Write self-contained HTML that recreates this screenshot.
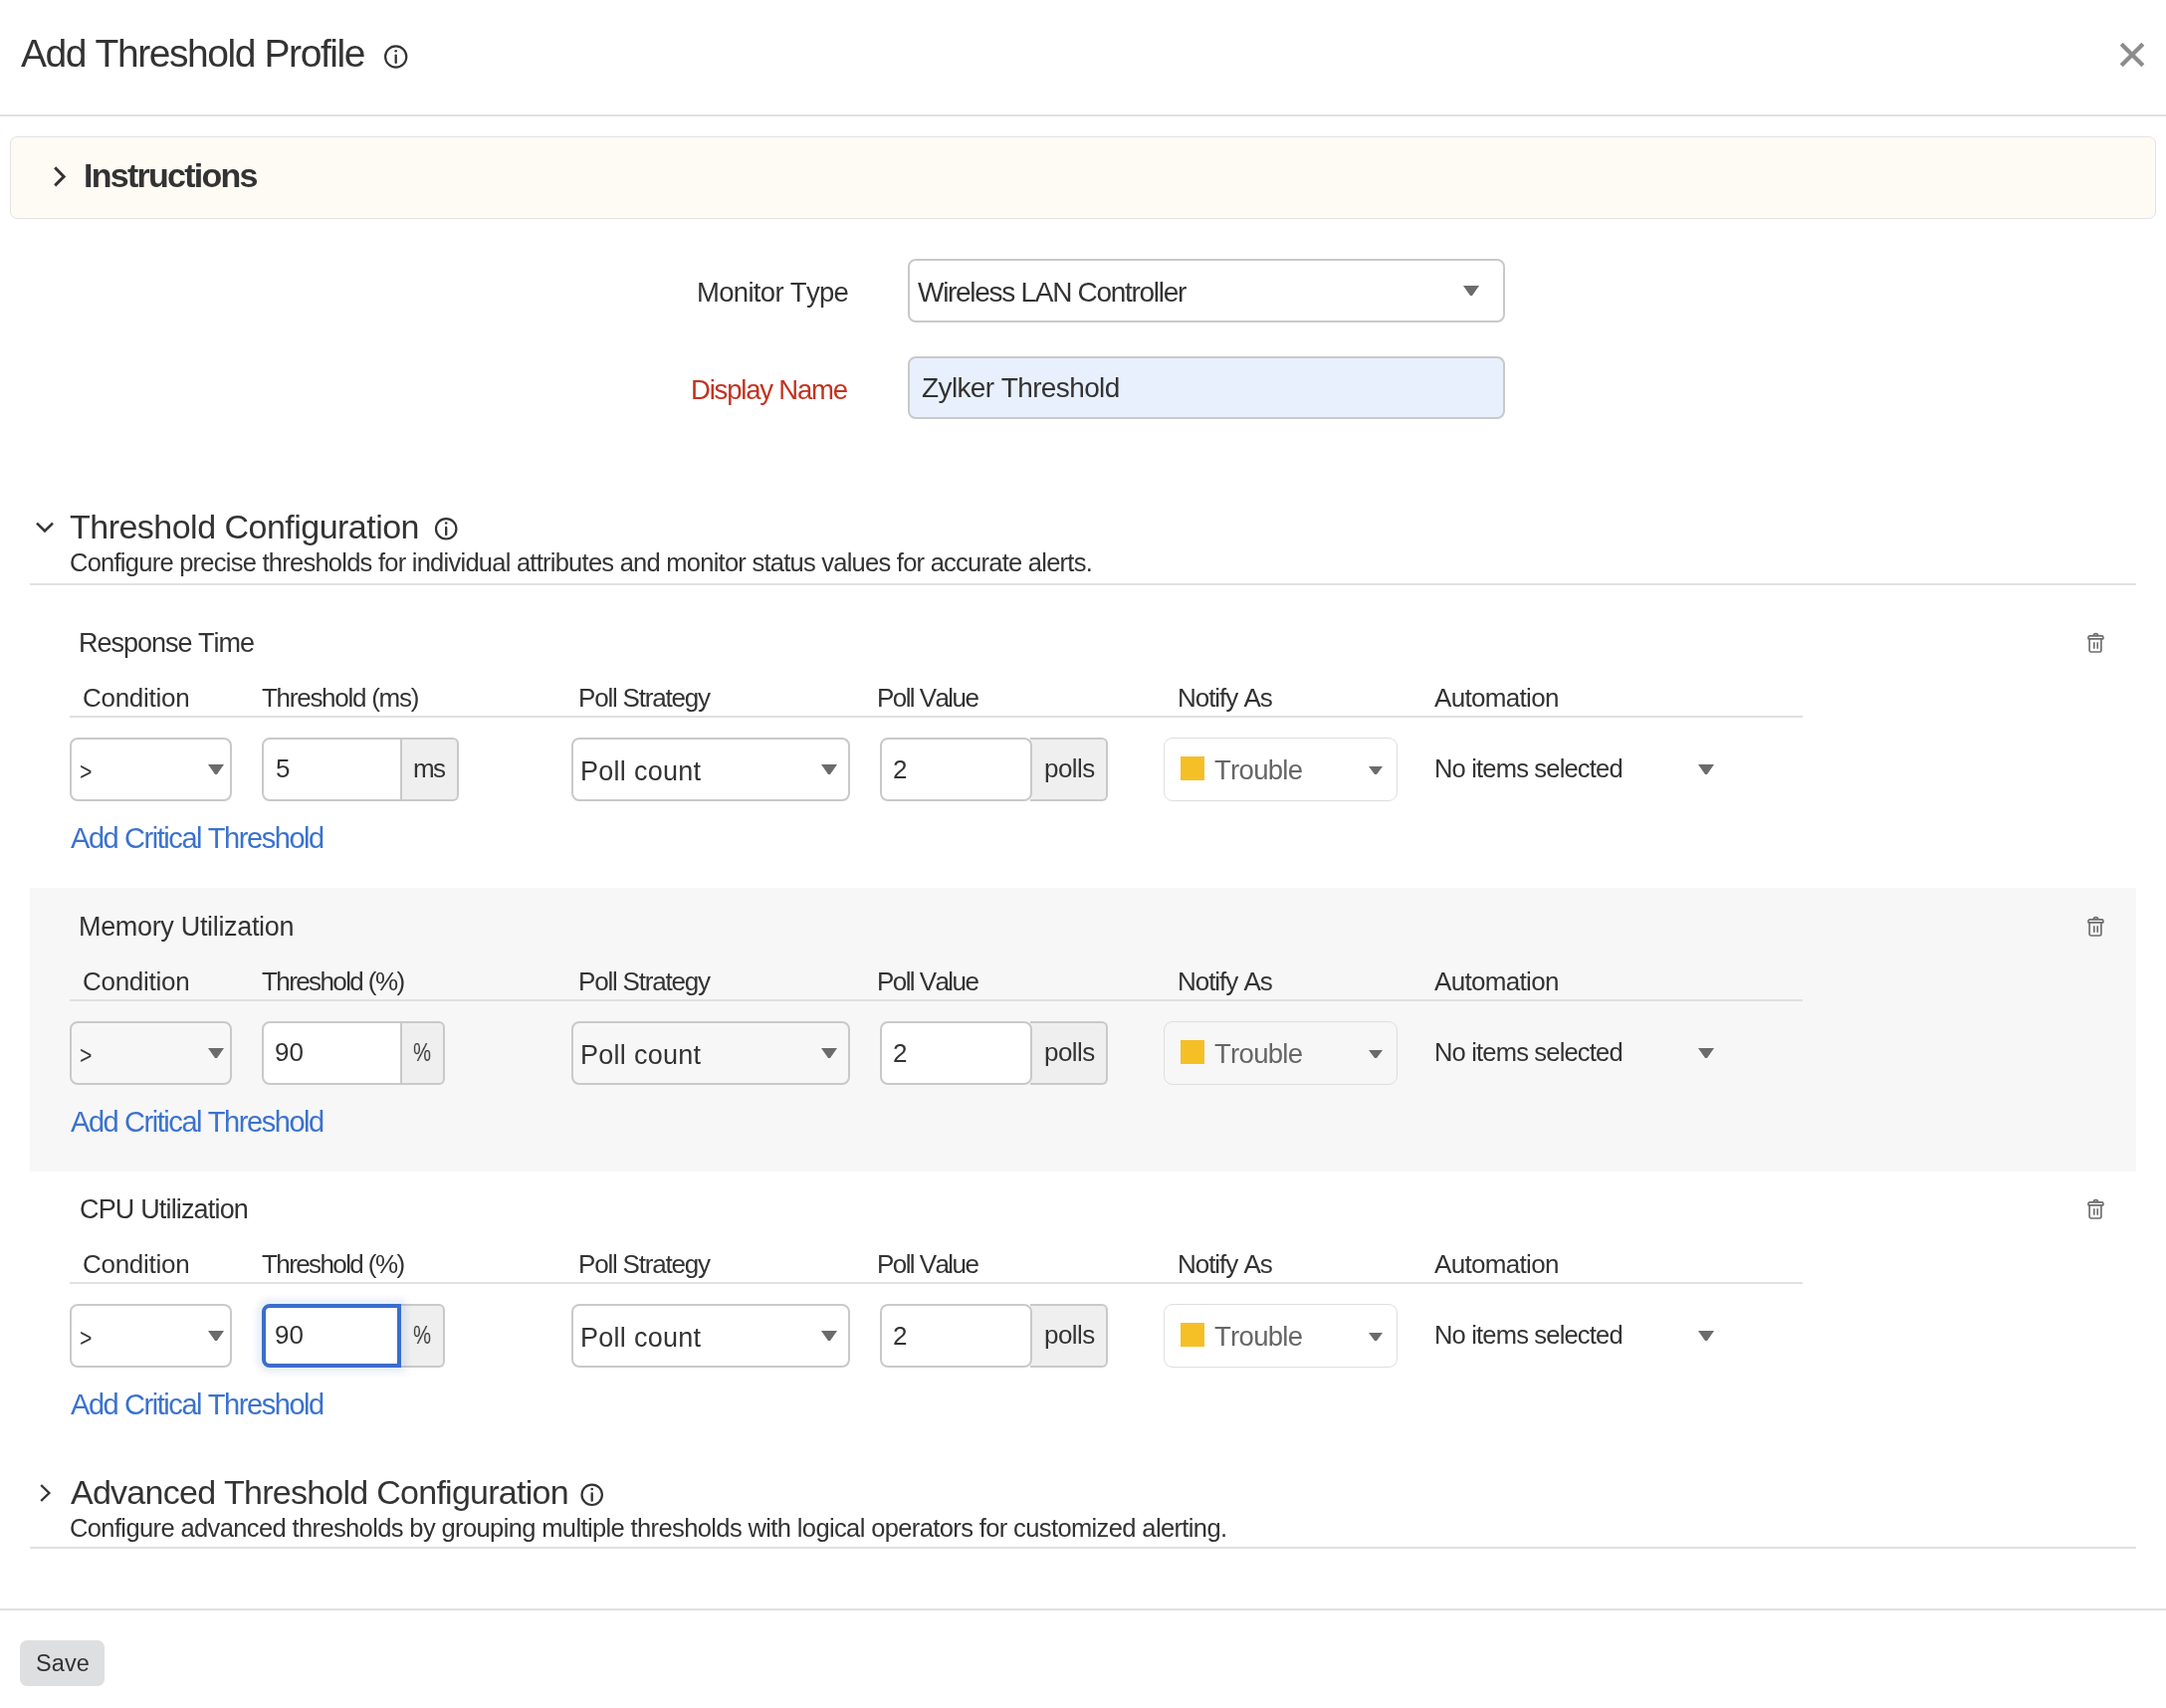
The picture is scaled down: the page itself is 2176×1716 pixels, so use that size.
<!DOCTYPE html>
<html><head><meta charset="utf-8"><title>Add Threshold Profile</title>
<style>
html,body{margin:0;padding:0;background:#fff;width:2176px;height:1716px;overflow:hidden}
body{position:relative;font-family:"Liberation Sans",sans-serif;font-kerning:none}
.t{position:absolute;white-space:nowrap;line-height:normal;font-kerning:none;will-change:transform}
.b{position:absolute}
</style></head><body>
<div class="t" style="left:21.22px;top:32px;font-size:39px;letter-spacing:-1.426px;color:#333333;font-weight:400;">Add Threshold Profile</div>
<svg class="b" style="left:384px;top:43px" width="28" height="28" viewBox="0 0 28 28"><circle cx="13.70" cy="14.00" r="10.6" fill="none" stroke="#333" stroke-width="2.2"/><circle cx="13.70" cy="8.20" r="1.3" fill="#333"/><line x1="13.70" y1="12.60" x2="13.70" y2="19.90" stroke="#333" stroke-width="2.3" stroke-linecap="round"/></svg>
<svg class="b" style="left:2128px;top:41px" width="28" height="28" viewBox="0 0 28 28"><path d="M3.2,3.2 L24.8,24.8 M24.8,3.2 L3.2,24.8" stroke="#8c8c8c" stroke-width="4.2"/></svg>
<div class="b" style="left:0px;top:115px;width:2176px;height:2px;background:#e0e1e1"></div>
<div class="b" style="left:10px;top:137px;width:2156px;height:83px;background:#fefbf4;border:1.5px solid #e2e3e3;border-radius:7px;box-sizing:border-box"></div>
<svg class="b" style="left:52px;top:166px" width="16" height="23" viewBox="0 0 16 23"><polyline points="3.2,2.4 12.2,11.4 3.2,20.4" fill="none" stroke="#333" stroke-width="2.9"/></svg>
<div class="t" style="left:84.33px;top:157px;font-size:34px;letter-spacing:-1.746px;color:#333333;font-weight:700;">Instructions</div>
<div class="t" style="left:699.54px;top:278px;font-size:27.5px;letter-spacing:-0.691px;color:#333333;font-weight:400;">Monitor Type</div>
<div class="b" style="left:912px;top:260px;width:600px;height:64px;background:#fff;border:2px solid #c9c9c9;border-radius:8px;box-sizing:border-box"></div>
<div class="t" style="left:921.88px;top:278px;font-size:28px;letter-spacing:-1.293px;color:#333333;font-weight:400;">Wireless LAN Controller</div>
<svg class="b" style="left:1470px;top:287px" width="16" height="10" viewBox="0 0 16 10"><polygon points="0,0 16,0 9.0,10 7.0,10" fill="#6b6b6b"/></svg>
<div class="t" style="left:694.34px;top:376px;font-size:27.5px;letter-spacing:-1.190px;color:#c4321f;font-weight:400;">Display Name</div>
<div class="b" style="left:912px;top:358px;width:600px;height:63px;background:#e8f0fd;border:2px solid #c9c9c9;border-radius:8px;box-sizing:border-box"></div>
<div class="t" style="left:925.51px;top:374px;font-size:28px;letter-spacing:-0.614px;color:#333333;font-weight:400;">Zylker Threshold</div>
<svg class="b" style="left:34px;top:522px" width="22" height="16" viewBox="0 0 22 16"><polyline points="3,3.6 11,11.4 19,3.6" fill="none" stroke="#333" stroke-width="2.5"/></svg>
<div class="t" style="left:69.74px;top:510px;font-size:34px;letter-spacing:-0.518px;color:#333333;font-weight:400;">Threshold Configuration</div>
<svg class="b" style="left:434px;top:517px" width="28" height="28" viewBox="0 0 28 28"><circle cx="14.20" cy="14.30" r="10.2" fill="none" stroke="#333" stroke-width="2.2"/><circle cx="14.20" cy="8.50" r="1.3" fill="#333"/><line x1="14.20" y1="12.90" x2="14.20" y2="20.20" stroke="#333" stroke-width="2.3" stroke-linecap="round"/></svg>
<div class="t" style="left:70.01px;top:551px;font-size:25.5px;letter-spacing:-0.750px;color:#333333;font-weight:400;">Configure precise thresholds for individual attributes and monitor status values for accurate alerts.</div>
<div class="b" style="left:30px;top:586px;width:2116px;height:2px;background:#e0e1e1"></div>
<div class="b" style="left:30px;top:892px;width:2116px;height:285px;background:#f7f7f7"></div>
<div class="t" style="left:79.29px;top:631px;font-size:27px;letter-spacing:-1.014px;color:#333333;font-weight:400;">Response Time</div>
<svg class="b" style="left:2096px;top:635px" width="20" height="22" viewBox="0 0 20 22"><g fill="none" stroke="#6e6e6e" stroke-width="1.65" stroke-linejoin="round"><path d="M7.2,3.8 a2.25,2.25 0 0 1 4.5,0"/><path d="M3.4,3.8 h12.1 a1.4,1.4 0 0 1 1.4,1.4 v1.6 h-14.9 v-1.6 a1.4,1.4 0 0 1 1.4,-1.4 z"/><path d="M3.1,6.8 v11.5 a1.7,1.7 0 0 0 1.7,1.7 h8.4 a1.7,1.7 0 0 0 1.7,-1.7 v-11.5"/><path d="M7.8,10.2 v6.6 M11.2,10.2 v6.6"/></g></svg>
<div class="t" style="left:83.48px;top:686px;font-size:26px;letter-spacing:-0.280px;color:#333333;font-weight:400;">Condition</div>
<div class="t" style="left:263.12px;top:686px;font-size:26px;letter-spacing:-1.271px;color:#333333;font-weight:400;">Threshold (ms)</div>
<div class="t" style="left:581.47px;top:686px;font-size:26px;letter-spacing:-1.202px;color:#333333;font-weight:400;">Poll Strategy</div>
<div class="t" style="left:881.27px;top:686px;font-size:26px;letter-spacing:-1.576px;color:#333333;font-weight:400;">Poll Value</div>
<div class="t" style="left:1182.57px;top:686px;font-size:26px;letter-spacing:-1.032px;color:#333333;font-weight:400;">Notify As</div>
<div class="t" style="left:1440.65px;top:686px;font-size:26px;letter-spacing:-0.676px;color:#333333;font-weight:400;">Automation</div>
<div class="b" style="left:70px;top:719px;width:1741px;height:2px;background:#e0e0e0"></div>
<div class="b" style="left:70px;top:741px;width:163px;height:64px;background:#fff;border:2px solid #c9c9c9;border-radius:8px;box-sizing:border-box"></div>
<div class="t" style="left:80.12px;top:761px;font-size:25px;letter-spacing:0.000px;color:#333333;font-weight:400;transform:scaleX(0.85);transform-origin:0 0">&gt;</div>
<svg class="b" style="left:209px;top:768px" width="16" height="10" viewBox="0 0 16 10"><polygon points="0,0 16,0 9.0,10 7.0,10" fill="#6b6b6b"/></svg>
<div class="b" style="left:402px;top:741px;width:59px;height:64px;background:#efefef;border:2px solid #c9c9c9;border-left:none;border-radius:0 6px 6px 0;box-sizing:border-box"></div>
<div class="b" style="left:263px;top:741px;width:141px;height:64px;background:#fff;border:2px solid #c9c9c9;border-radius:8px 0 0 8px;box-sizing:border-box"></div>
<div class="t" style="left:276.96px;top:757px;font-size:26px;letter-spacing:0.000px;color:#333333;font-weight:400;">5</div>
<div class="t" style="left:414.87px;top:757px;font-size:26px;letter-spacing:-1.592px;color:#333333;font-weight:400;">ms</div>
<div class="b" style="left:574px;top:741px;width:280px;height:64px;background:#fff;border:2px solid #c9c9c9;border-radius:8px;box-sizing:border-box"></div>
<div class="t" style="left:583.19px;top:760px;font-size:27px;letter-spacing:0.271px;color:#333333;font-weight:400;">Poll count</div>
<svg class="b" style="left:825px;top:768px" width="16" height="10" viewBox="0 0 16 10"><polygon points="0,0 16,0 9.0,10 7.0,10" fill="#6b6b6b"/></svg>
<div class="b" style="left:1035px;top:741px;width:78px;height:64px;background:#efefef;border:2px solid #c9c9c9;border-left:none;border-radius:0 6px 6px 0;box-sizing:border-box"></div>
<div class="b" style="left:884px;top:741px;width:153px;height:64px;background:#fff;border:2px solid #c9c9c9;border-radius:8px;box-sizing:border-box"></div>
<div class="t" style="left:896.89px;top:758px;font-size:26px;letter-spacing:0.000px;color:#333333;font-weight:400;">2</div>
<div class="t" style="left:1048.62px;top:757px;font-size:26px;letter-spacing:-0.564px;color:#333333;font-weight:400;">polls</div>
<div class="b" style="left:1169px;top:741px;width:235px;height:64px;background:#fff;border:1.5px solid #dedede;border-radius:9px;box-sizing:border-box"></div>
<div class="b" style="left:1186px;top:760px;width:24px;height:24px;background:#f5bf26"></div>
<div class="t" style="left:1220.18px;top:758px;font-size:27.5px;letter-spacing:-0.700px;color:#666;font-weight:400;">Trouble</div>
<svg class="b" style="left:1375px;top:770px" width="14" height="8" viewBox="0 0 14 8"><polygon points="0,0 14,0 8.0,8 6.0,8" fill="#6b6b6b"/></svg>
<div class="t" style="left:1441.01px;top:758px;font-size:25.5px;letter-spacing:-0.815px;color:#333333;font-weight:400;">No items selected</div>
<svg class="b" style="left:1706px;top:768px" width="16" height="10" viewBox="0 0 16 10"><polygon points="0,0 16,0 9.0,10 7.0,10" fill="#6b6b6b"/></svg>
<div class="t" style="left:70.94px;top:826px;font-size:29px;letter-spacing:-1.431px;color:#3a72cf;font-weight:400;">Add Critical Threshold</div>
<div class="t" style="left:79.29px;top:916px;font-size:27px;letter-spacing:-0.328px;color:#333333;font-weight:400;">Memory Utilization</div>
<svg class="b" style="left:2096px;top:920px" width="20" height="22" viewBox="0 0 20 22"><g fill="none" stroke="#6e6e6e" stroke-width="1.65" stroke-linejoin="round"><path d="M7.2,3.8 a2.25,2.25 0 0 1 4.5,0"/><path d="M3.4,3.8 h12.1 a1.4,1.4 0 0 1 1.4,1.4 v1.6 h-14.9 v-1.6 a1.4,1.4 0 0 1 1.4,-1.4 z"/><path d="M3.1,6.8 v11.5 a1.7,1.7 0 0 0 1.7,1.7 h8.4 a1.7,1.7 0 0 0 1.7,-1.7 v-11.5"/><path d="M7.8,10.2 v6.6 M11.2,10.2 v6.6"/></g></svg>
<div class="t" style="left:83.48px;top:971px;font-size:26px;letter-spacing:-0.280px;color:#333333;font-weight:400;">Condition</div>
<div class="t" style="left:263.12px;top:971px;font-size:26px;letter-spacing:-1.598px;color:#333333;font-weight:400;">Threshold (%)</div>
<div class="t" style="left:581.47px;top:971px;font-size:26px;letter-spacing:-1.202px;color:#333333;font-weight:400;">Poll Strategy</div>
<div class="t" style="left:881.27px;top:971px;font-size:26px;letter-spacing:-1.576px;color:#333333;font-weight:400;">Poll Value</div>
<div class="t" style="left:1182.57px;top:971px;font-size:26px;letter-spacing:-1.032px;color:#333333;font-weight:400;">Notify As</div>
<div class="t" style="left:1440.65px;top:971px;font-size:26px;letter-spacing:-0.676px;color:#333333;font-weight:400;">Automation</div>
<div class="b" style="left:70px;top:1004px;width:1741px;height:2px;background:#e0e0e0"></div>
<div class="b" style="left:70px;top:1026px;width:163px;height:64px;background:transparent;border:2px solid #c9c9c9;border-radius:8px;box-sizing:border-box"></div>
<div class="t" style="left:80.12px;top:1046px;font-size:25px;letter-spacing:0.000px;color:#333333;font-weight:400;transform:scaleX(0.85);transform-origin:0 0">&gt;</div>
<svg class="b" style="left:209px;top:1053px" width="16" height="10" viewBox="0 0 16 10"><polygon points="0,0 16,0 9.0,10 7.0,10" fill="#6b6b6b"/></svg>
<div class="b" style="left:402px;top:1026px;width:45px;height:64px;background:#efefef;border:2px solid #c9c9c9;border-left:none;border-radius:0 6px 6px 0;box-sizing:border-box"></div>
<div class="b" style="left:263px;top:1026px;width:141px;height:64px;background:#fff;border:2px solid #c9c9c9;border-radius:8px 0 0 8px;box-sizing:border-box"></div>
<div class="t" style="left:275.78px;top:1042px;font-size:26px;letter-spacing:0.000px;color:#333333;font-weight:400;">90</div>
<div class="t" style="left:414.57px;top:1042px;font-size:26px;letter-spacing:0.000px;color:#333333;font-weight:400;transform:scaleX(0.78);transform-origin:0 0">%</div>
<div class="b" style="left:574px;top:1026px;width:280px;height:64px;background:transparent;border:2px solid #c9c9c9;border-radius:8px;box-sizing:border-box"></div>
<div class="t" style="left:583.19px;top:1045px;font-size:27px;letter-spacing:0.271px;color:#333333;font-weight:400;">Poll count</div>
<svg class="b" style="left:825px;top:1053px" width="16" height="10" viewBox="0 0 16 10"><polygon points="0,0 16,0 9.0,10 7.0,10" fill="#6b6b6b"/></svg>
<div class="b" style="left:1035px;top:1026px;width:78px;height:64px;background:#efefef;border:2px solid #c9c9c9;border-left:none;border-radius:0 6px 6px 0;box-sizing:border-box"></div>
<div class="b" style="left:884px;top:1026px;width:153px;height:64px;background:#fff;border:2px solid #c9c9c9;border-radius:8px;box-sizing:border-box"></div>
<div class="t" style="left:896.89px;top:1043px;font-size:26px;letter-spacing:0.000px;color:#333333;font-weight:400;">2</div>
<div class="t" style="left:1048.62px;top:1042px;font-size:26px;letter-spacing:-0.564px;color:#333333;font-weight:400;">polls</div>
<div class="b" style="left:1169px;top:1026px;width:235px;height:64px;background:transparent;border:1.5px solid #dedede;border-radius:9px;box-sizing:border-box"></div>
<div class="b" style="left:1186px;top:1045px;width:24px;height:24px;background:#f5bf26"></div>
<div class="t" style="left:1220.18px;top:1043px;font-size:27.5px;letter-spacing:-0.700px;color:#666;font-weight:400;">Trouble</div>
<svg class="b" style="left:1375px;top:1055px" width="14" height="8" viewBox="0 0 14 8"><polygon points="0,0 14,0 8.0,8 6.0,8" fill="#6b6b6b"/></svg>
<div class="t" style="left:1441.01px;top:1043px;font-size:25.5px;letter-spacing:-0.815px;color:#333333;font-weight:400;">No items selected</div>
<svg class="b" style="left:1706px;top:1053px" width="16" height="10" viewBox="0 0 16 10"><polygon points="0,0 16,0 9.0,10 7.0,10" fill="#6b6b6b"/></svg>
<div class="t" style="left:70.94px;top:1111px;font-size:29px;letter-spacing:-1.431px;color:#3a72cf;font-weight:400;">Add Critical Threshold</div>
<div class="t" style="left:80.13px;top:1200px;font-size:27px;letter-spacing:-0.838px;color:#333333;font-weight:400;">CPU Utilization</div>
<svg class="b" style="left:2096px;top:1204px" width="20" height="22" viewBox="0 0 20 22"><g fill="none" stroke="#6e6e6e" stroke-width="1.65" stroke-linejoin="round"><path d="M7.2,3.8 a2.25,2.25 0 0 1 4.5,0"/><path d="M3.4,3.8 h12.1 a1.4,1.4 0 0 1 1.4,1.4 v1.6 h-14.9 v-1.6 a1.4,1.4 0 0 1 1.4,-1.4 z"/><path d="M3.1,6.8 v11.5 a1.7,1.7 0 0 0 1.7,1.7 h8.4 a1.7,1.7 0 0 0 1.7,-1.7 v-11.5"/><path d="M7.8,10.2 v6.6 M11.2,10.2 v6.6"/></g></svg>
<div class="t" style="left:83.48px;top:1255px;font-size:26px;letter-spacing:-0.280px;color:#333333;font-weight:400;">Condition</div>
<div class="t" style="left:263.12px;top:1255px;font-size:26px;letter-spacing:-1.598px;color:#333333;font-weight:400;">Threshold (%)</div>
<div class="t" style="left:581.47px;top:1255px;font-size:26px;letter-spacing:-1.202px;color:#333333;font-weight:400;">Poll Strategy</div>
<div class="t" style="left:881.27px;top:1255px;font-size:26px;letter-spacing:-1.576px;color:#333333;font-weight:400;">Poll Value</div>
<div class="t" style="left:1182.57px;top:1255px;font-size:26px;letter-spacing:-1.032px;color:#333333;font-weight:400;">Notify As</div>
<div class="t" style="left:1440.65px;top:1255px;font-size:26px;letter-spacing:-0.676px;color:#333333;font-weight:400;">Automation</div>
<div class="b" style="left:70px;top:1288px;width:1741px;height:2px;background:#e0e0e0"></div>
<div class="b" style="left:70px;top:1310px;width:163px;height:64px;background:#fff;border:2px solid #c9c9c9;border-radius:8px;box-sizing:border-box"></div>
<div class="t" style="left:80.12px;top:1330px;font-size:25px;letter-spacing:0.000px;color:#333333;font-weight:400;transform:scaleX(0.85);transform-origin:0 0">&gt;</div>
<svg class="b" style="left:209px;top:1337px" width="16" height="10" viewBox="0 0 16 10"><polygon points="0,0 16,0 9.0,10 7.0,10" fill="#6b6b6b"/></svg>
<div class="b" style="left:402px;top:1310px;width:45px;height:64px;background:#efefef;border:2px solid #c9c9c9;border-left:none;border-radius:0 6px 6px 0;box-sizing:border-box"></div>
<div class="b" style="left:263px;top:1310px;width:140px;height:64px;background:#fff;border:4px solid #3a6dcc;border-radius:8px 0 0 8px;box-sizing:border-box;box-shadow:0 0 6px 5px rgba(58,109,204,0.12)"></div>
<div class="t" style="left:275.78px;top:1326px;font-size:26px;letter-spacing:0.000px;color:#333333;font-weight:400;">90</div>
<div class="t" style="left:414.57px;top:1326px;font-size:26px;letter-spacing:0.000px;color:#333333;font-weight:400;transform:scaleX(0.78);transform-origin:0 0">%</div>
<div class="b" style="left:574px;top:1310px;width:280px;height:64px;background:#fff;border:2px solid #c9c9c9;border-radius:8px;box-sizing:border-box"></div>
<div class="t" style="left:583.19px;top:1329px;font-size:27px;letter-spacing:0.271px;color:#333333;font-weight:400;">Poll count</div>
<svg class="b" style="left:825px;top:1337px" width="16" height="10" viewBox="0 0 16 10"><polygon points="0,0 16,0 9.0,10 7.0,10" fill="#6b6b6b"/></svg>
<div class="b" style="left:1035px;top:1310px;width:78px;height:64px;background:#efefef;border:2px solid #c9c9c9;border-left:none;border-radius:0 6px 6px 0;box-sizing:border-box"></div>
<div class="b" style="left:884px;top:1310px;width:153px;height:64px;background:#fff;border:2px solid #c9c9c9;border-radius:8px;box-sizing:border-box"></div>
<div class="t" style="left:896.89px;top:1327px;font-size:26px;letter-spacing:0.000px;color:#333333;font-weight:400;">2</div>
<div class="t" style="left:1048.62px;top:1326px;font-size:26px;letter-spacing:-0.564px;color:#333333;font-weight:400;">polls</div>
<div class="b" style="left:1169px;top:1310px;width:235px;height:64px;background:#fff;border:1.5px solid #dedede;border-radius:9px;box-sizing:border-box"></div>
<div class="b" style="left:1186px;top:1329px;width:24px;height:24px;background:#f5bf26"></div>
<div class="t" style="left:1220.18px;top:1327px;font-size:27.5px;letter-spacing:-0.700px;color:#666;font-weight:400;">Trouble</div>
<svg class="b" style="left:1375px;top:1339px" width="14" height="8" viewBox="0 0 14 8"><polygon points="0,0 14,0 8.0,8 6.0,8" fill="#6b6b6b"/></svg>
<div class="t" style="left:1441.01px;top:1327px;font-size:25.5px;letter-spacing:-0.815px;color:#333333;font-weight:400;">No items selected</div>
<svg class="b" style="left:1706px;top:1337px" width="16" height="10" viewBox="0 0 16 10"><polygon points="0,0 16,0 9.0,10 7.0,10" fill="#6b6b6b"/></svg>
<div class="t" style="left:70.94px;top:1395px;font-size:29px;letter-spacing:-1.431px;color:#3a72cf;font-weight:400;">Add Critical Threshold</div>
<svg class="b" style="left:37px;top:1489px" width="18" height="23" viewBox="0 0 18 23"><polyline points="4.2,3 12.4,11 4.2,19" fill="none" stroke="#333" stroke-width="2.3"/></svg>
<div class="t" style="left:71.43px;top:1480px;font-size:34px;letter-spacing:-0.741px;color:#333333;font-weight:400;">Advanced Threshold Configuration</div>
<svg class="b" style="left:581px;top:1488px" width="28" height="28" viewBox="0 0 28 28"><circle cx="13.70" cy="13.80" r="10.2" fill="none" stroke="#333" stroke-width="2.2"/><circle cx="13.70" cy="8.00" r="1.3" fill="#333"/><line x1="13.70" y1="12.40" x2="13.70" y2="19.70" stroke="#333" stroke-width="2.3" stroke-linecap="round"/></svg>
<div class="t" style="left:69.71px;top:1521px;font-size:25.5px;letter-spacing:-0.623px;color:#333333;font-weight:400;">Configure advanced thresholds by grouping multiple thresholds with logical operators for customized alerting.</div>
<div class="b" style="left:30px;top:1554px;width:2116px;height:2px;background:#e0e1e1"></div>
<div class="b" style="left:0px;top:1616px;width:2176px;height:2px;background:#e0e1e1"></div>
<div class="b" style="left:20px;top:1648px;width:85px;height:46px;background:#dedfe1;border-radius:7px"></div>
<div class="t" style="left:35.83px;top:1658px;font-size:23.5px;letter-spacing:0.116px;color:#333333;font-weight:400;">Save</div>
</body></html>
